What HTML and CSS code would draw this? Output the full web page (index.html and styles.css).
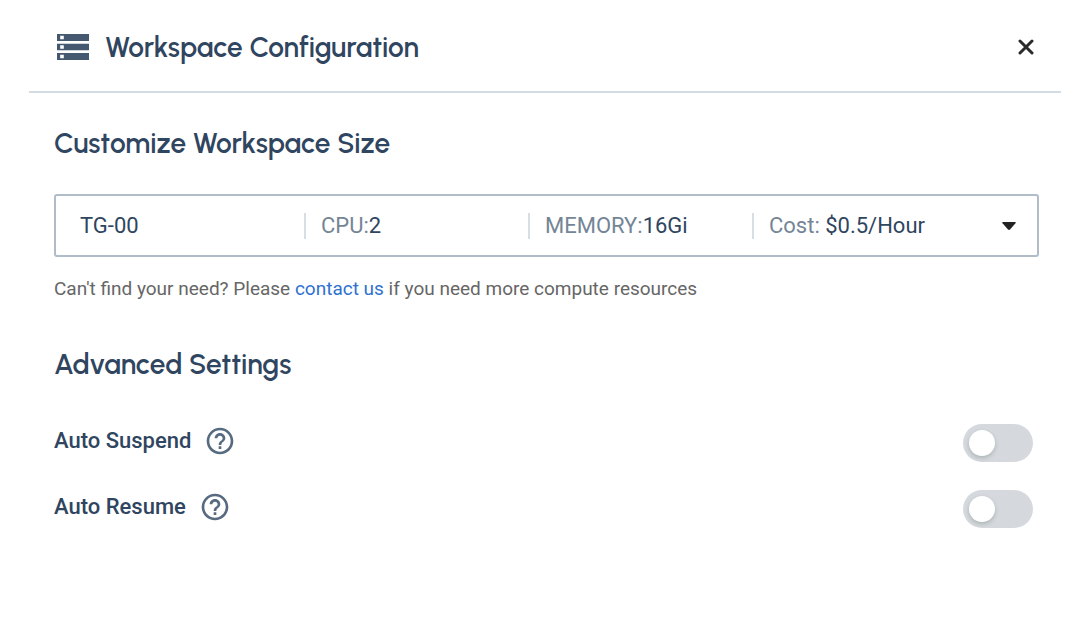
FILE: index.html
```html
<!DOCTYPE html>
<html lang="en">
<head>
<meta charset="utf-8">
<meta name="viewport" content="width=device-width, initial-scale=1">
<title>Workspace Configuration</title>
<link rel="stylesheet" href="styles.css">
</head>
<body>
<main class="dialog">
  <header class="dialog-header">
    <svg class="server-icon" viewBox="0 0 32 26" aria-hidden="true">
      <path fill-rule="evenodd" d="M0 0h32v7H0zM3.200 1.700v3.600h3.600V1.700zM0 9.700h32v6.600H0zM3.200 11.300v3.400h3.600v-3.400zM0 19h32v7H0zM3.200 20.700v3.600h3.600v-3.600z"/>
    </svg>
    <h1 class="title">Workspace Configuration</h1>
    <button class="close" type="button" aria-label="Close">
      <svg class="close-icon" viewBox="0 0 16 16" aria-hidden="true"><path d="M2 2l12 12M14 2L2 14"/></svg>
    </button>
  </header>

  <div class="dialog-body">
    <section class="size">
      <h2 class="title">Customize Workspace Size</h2>
      <div class="size-picker">
        <div class="spec">TG-00</div>
        <div class="spec"><span class="spec-name">CPU:</span>2</div>
        <div class="spec"><span class="spec-name">MEMORY:</span>16Gi</div>
        <div class="spec"><span class="spec-name">Cost: </span>$0.5/Hour</div>
        <svg class="caret" viewBox="0 0 14 8" aria-hidden="true"><path d="M1 0h12q1.500 0 .5 1.200L8 7.500q-1 .8-2 0L.5 1.200Q-.5 0 1 0z"/></svg>
        <select class="size-select" aria-label="Workspace size">
          <option>TG-00</option>
        </select>
      </div>
      <p class="hint">Can't find your need? Please <a class="link" href="#contact">contact us</a> if you need more compute resources</p>
    </section>

    <section class="advanced">
      <h2 class="title">Advanced Settings</h2>
      <div class="setting">
        <label class="setting-label" for="suspend">Auto Suspend</label>
        <button class="help" type="button" aria-label="About auto suspend">
          <svg class="help-icon" viewBox="0 0 24 24" aria-hidden="true"><path d="M11 18h2v-2h-2v2zm1-16C6.480 2 2 6.480 2 12s4.480 10 10 10 10-4.480 10-10S17.520 2 12 2zm0 18c-4.410 0-8-3.590-8-8s3.590-8 8-8 8 3.590 8 8-3.590 8-8 8zm0-14c-2.210 0-4 1.790-4 4h2c0-1.100.9-2 2-2s2 .9 2 2c0 2-3 1.750-3 5h2c0-2.250 3-2.500 3-5 0-2.210-1.790-4-4-4z"/></svg>
        </button>
        <input class="switch" type="checkbox" role="switch" id="suspend">
      </div>
      <div class="setting">
        <label class="setting-label" for="resume">Auto Resume</label>
        <button class="help" type="button" aria-label="About auto resume">
          <svg class="help-icon" viewBox="0 0 24 24" aria-hidden="true"><path d="M11 18h2v-2h-2v2zm1-16C6.480 2 2 6.480 2 12s4.480 10 10 10 10-4.480 10-10S17.520 2 12 2zm0 18c-4.410 0-8-3.590-8-8s3.590-8 8-8 8 3.590 8 8-3.590 8-8 8zm0-14c-2.210 0-4 1.790-4 4h2c0-1.100.9-2 2-2s2 .9 2 2c0 2-3 1.750-3 5h2c0-2.250 3-2.500 3-5 0-2.210-1.790-4-4-4z"/></svg>
        </button>
        <input class="switch" type="checkbox" role="switch" id="resume">
      </div>
    </section>
  </div>
</main>
</body>
</html>
```
FILE: styles.css
```css
* {
  box-sizing: border-box;
}

body {
  margin: 0;
  background: #fff;
  color: #2f4560;
  font-family: Roboto, "Liberation Sans", sans-serif;
  font-size: 22px;
  line-height: 32px;
}

.dialog {
  padding: 0 31px 0 29px;
}

.dialog-header {
  display: flex;
  align-items: center;
  gap: 16px;
  padding: 28px 24px 25px 28px;
  border-bottom: 2px solid #d5dce1;
}

.server-icon {
  width: 32px;
  height: 26px;
  fill: #44586f;
}

.title {
  margin: 0;
  font-family: Urbanist, Lato, sans-serif;
  font-size: 28px;
  font-weight: 600;
  line-height: 38px;
}

button {
  display: flex;
  padding: 0;
  border: 0;
  background: none;
  cursor: pointer;
}

.close {
  margin-left: auto;
  padding: 3px;
}

.close-icon {
  width: 16px;
  height: 16px;
  fill: none;
  stroke: #2a2a2a;
  stroke-width: 3;
  stroke-linecap: round;
}

.dialog-body {
  padding: 31px 22px 32px 25px;
}

.size-picker {
  position: relative;
  display: grid;
  grid-template-columns: repeat(4, 1fr) 40px;
  align-items: center;
  margin-top: 32px;
  padding: 17px 21px 16px 24px;
  border: 2px solid #b0bcc8;
  border-radius: 3px;
}

.spec {
  padding-left: 15px;
  border-left: 2px solid #d8dee5;
  line-height: 26px;
}

.spec:first-child {
  padding-left: 0;
  border-left: 0;
}

.spec-name {
  color: #748596;
}

.caret {
  justify-self: end;
  width: 14px;
  height: 8px;
  fill: #222;
}

.size-select {
  position: absolute;
  inset: 0;
  width: 100%;
  opacity: 0;
  cursor: pointer;
}

.hint {
  margin: 16px 0 0;
  color: #666;
  font-size: 19px;
}

.link {
  color: #2f72cf;
  text-decoration: none;
}

.advanced {
  margin-top: 40px;
}

.setting {
  display: flex;
  align-items: flex-start;
  margin-top: 28px;
  padding-right: 6px;
}

.title + .setting {
  margin-top: 41px;
}

.setting-label {
  font-weight: 500;
  line-height: 34px;
}

.help {
  margin-left: 13px;
  padding: 1px 0;
}

.help-icon {
  width: 32px;
  height: 32px;
  fill: #566a80;
}

.switch {
  appearance: none;
  display: flex;
  width: 70px;
  height: 38px;
  margin: 0 0 0 auto;
  padding: 6px;
  border-radius: 19px;
  background: #d5d9de;
  cursor: pointer;
}

.switch::before {
  content: "";
  width: 26px;
  height: 26px;
  border-radius: 50%;
  background: #fff;
  box-shadow: 0 2px 4px rgba(0, 35, 11, 0.2);
}

.switch:checked {
  justify-content: flex-end;
  background: #2f72cf;
}
```
